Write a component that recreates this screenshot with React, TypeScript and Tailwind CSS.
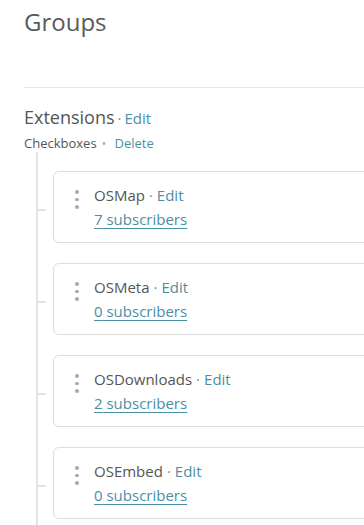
import React from "react";

const items = [
  { name: "OSMap", subs: 7 },
  { name: "OSMeta", subs: 0 },
  { name: "OSDownloads", subs: 2 },
  { name: "OSEmbed", subs: 0 },
];

export default function App() {
  return (
    <div className="h-[525px] w-[364px] overflow-hidden bg-white font-['Open_Sans',sans-serif] text-[#555555]">
      <div className="pl-6">
        <h1 className="pt-[6px] text-[24px] leading-[32px] font-normal text-[#5a5a5a]">Groups</h1>
        <div className="mt-[49px] h-px bg-[#e6e6e6]" />
        <div className="mt-[17px] flex items-baseline leading-[24px]">
          <span className="text-[18px] text-[#555555]">Extensions</span>
          <span className="ml-[3px] text-[15px] text-[#888888]">·</span>
          <span className="ml-[3px] text-[15px] text-[#4b8fa5]">Edit</span>
        </div>
        <div className="mt-[4px] flex items-baseline text-[13px] leading-[18px]">
          <span className="text-[#555555]">Checkboxes</span>
          <span className="ml-[5px] text-[#aaaaaa]">•</span>
          <span className="ml-[8px] text-[#4b8fa5]">Delete</span>
        </div>
        <div className="ml-[12px] flex flex-col gap-[20px] border-l-2 border-[#e3e3e3] pt-[19px] pb-[40px]">
          {items.map((it) => (
            <div key={it.name} className="flex items-start">
              <div className="mt-[38px] h-[2px] w-[8px] shrink-0 bg-[#e3e3e3]" />
              <div className="ml-[7px] flex w-[340px] shrink-0 items-start rounded-[6px] border border-[#dddddd] py-[11px] pl-[21px]">
                <div className="mt-[7px] flex w-[4px] flex-col items-center gap-[4px]">
                  <span className="h-[3.5px] w-[3.5px] rounded-full bg-[#a8a8a8]" />
                  <span className="h-[3.5px] w-[3.5px] rounded-full bg-[#a8a8a8]" />
                  <span className="h-[3.5px] w-[3.5px] rounded-full bg-[#a8a8a8]" />
                </div>
                <div className="ml-[15px] flex flex-col text-[15px] leading-[24px]">
                  <div className="flex items-baseline">
                    <span className="text-[#555555]">{it.name}</span>
                    <span className="ml-[4px] text-[#888888]">·</span>
                    <span className="ml-[4px] text-[#4b8fa5]">Edit</span>
                  </div>
                  <div>
                    <span className="text-[#4b8fa5] underline decoration-[#4b8fa5] decoration-1 underline-offset-[3px]">
                      {it.subs} subscribers
                    </span>
                  </div>
                </div>
              </div>
            </div>
          ))}
        </div>
      </div>
    </div>
  );
}
